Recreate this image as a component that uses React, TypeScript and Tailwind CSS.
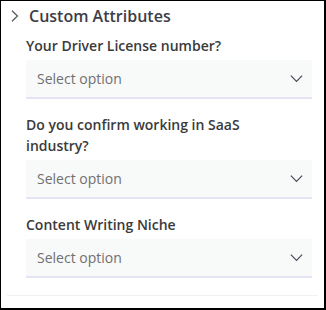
import React from 'react';

const fields = [
  'Your Driver License number?',
  'Do you confirm working in SaaS industry?',
  'Content Writing Niche',
];

const Chevron = ({ className }: { className?: string }) => (
  <svg className={className} viewBox="0 0 16 16" fill="none" stroke="currentColor" strokeWidth="1.3">
    <path d="M2 5 8 11l6-6" />
  </svg>
);

const App = () => {
  return (
    <div className="w-[326px] h-[310px] bg-white border-l border-t border-r-2 border-b-2 border-black font-['Open_Sans',sans-serif]">
      <div className="flex items-center h-[30px] pl-[9px]">
        <svg className="w-[10px] h-[12px] text-[#555]" viewBox="0 0 10 12" fill="none" stroke="currentColor" strokeWidth="1.2">
          <path d="M2 0.8 7.5 6 2 11.2" />
        </svg>
        <span className="ml-[9px] text-[16px] font-semibold text-[#3d3d47]">Custom Attributes</span>
      </div>
      <div className="pl-[25px] pr-[12px]">
        {fields.map((label) => (
          <div key={label} className="pt-[4px] pb-[11px]">
            <div className="text-[14px] font-semibold text-[#3a3a3a] leading-[21px] pr-[60px]">{label}</div>
            <div className="box-border mt-[4px] h-[39px] bg-[#f8f9f9] border-b-2 border-[#e4e4f4] flex items-center justify-between pl-[11px] pr-[8px]">
              <span className="text-[14px] text-[#707070]">Select option</span>
              <Chevron className="w-[15px] h-[15px] text-[#4a4a5a]" />
            </div>
          </div>
        ))}
      </div>
      <div className="mt-[6px] mx-[6px] border-t border-[#f0f0f0]" />
    </div>
  );
};

export default App;
